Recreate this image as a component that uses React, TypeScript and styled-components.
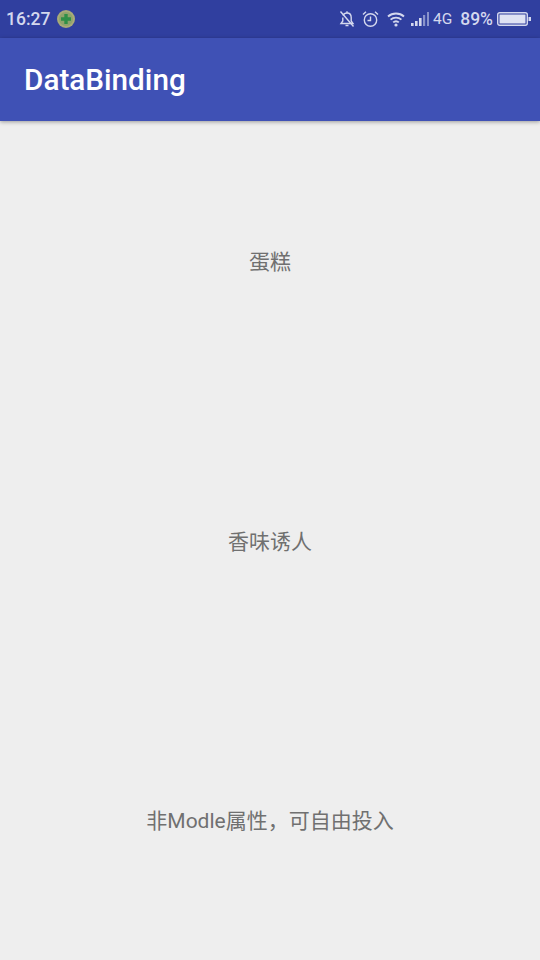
import styled, { createGlobalStyle } from "styled-components";

const GlobalStyle = createGlobalStyle`
  html, body {
    margin: 0;
    padding: 0;
    background: #eeeeee;
  }
`;

const Screen = styled.div`
  width: 540px;
  height: 960px;
  display: flex;
  flex-direction: column;
  overflow: hidden;
  background: #eeeeee;
  font-family: Roboto, "Noto Sans CJK SC", sans-serif;
`;

const StatusBar = styled.div`
  height: 38px;
  flex: none;
  display: flex;
  align-items: center;
  justify-content: space-between;
  padding: 0 9px 0 6px;
  background: #303f9f;
  color: #d4d8ee;
`;

const StatusGroup = styled.div`
  display: flex;
  align-items: center;
`;

const Time = styled.span`
  font-size: 17.5px;
  font-weight: 500;
  margin-right: 6px;
`;

const NetworkLabel = styled.span`
  font-size: 15.5px;
  margin: 0 8px 0 4px;
`;

const Percent = styled.span`
  font-size: 17.5px;
  font-weight: 500;
  margin-right: 4px;
`;

const StatusIcon = styled.svg<{ $gap?: number }>`
  display: block;
  flex: none;
  margin-right: ${({ $gap }) => $gap ?? 0}px;
`;

const AppBar = styled.header`
  height: 83px;
  flex: none;
  display: flex;
  align-items: center;
  padding: 0 24px;
  background: #3f51b5;
  box-shadow: 0 1px 4px rgba(0, 0, 0, 0.35);
  position: relative;
`;

const Title = styled.h1`
  margin: 0;
  font-size: 29.7px;
  font-weight: 500;
  color: #ffffff;
`;

const Content = styled.main`
  flex: 1;
  display: flex;
  flex-direction: column;
  align-items: center;
  padding-top: 129px;
  gap: 254.5px;
`;

const Label = styled.div`
  height: 25px;
  line-height: 25px;
  font-size: 21px;
  color: #707070;
  font-family: Roboto, "Noto Sans CJK SC", sans-serif;
`;

const AppBadge = () => (
  <StatusIcon width="20" height="20" viewBox="0 0 20 20">
    <circle cx="10" cy="10" r="9" fill="#a8ab78" />
    <circle cx="10" cy="10" r="7" fill="#8fa36c" />
    <path d="M10 5v10M5 10h10" stroke="#2f8f47" strokeWidth="3.4" />
  </StatusIcon>
);

const BellOff = () => (
  <StatusIcon $gap={7} width="16" height="18" viewBox="0 0 16 18" fill="none" stroke="#d4d8ee" strokeWidth="1.4">
    <path d="M4 5.5C5 3.5 6.5 3 8 3c2.8 0 4.2 2 4.2 4.5V11l1.8 2.5H2L3.8 11V7.5" />
    <path d="M6.5 15.5h3M8 1.3V3M1.5 1.5l13 15" />
  </StatusIcon>
);

const Alarm = () => (
  <StatusIcon $gap={8} width="17" height="18" viewBox="0 0 17 18" fill="none" stroke="#d4d8ee" strokeWidth="1.4">
    <circle cx="8.5" cy="10" r="6.2" />
    <path d="M8.5 6.5V10.5H5.5M1 4.5L4 1.8M16 4.5L13 1.8" />
  </StatusIcon>
);

const Wifi = () => (
  <StatusIcon $gap={6} width="18" height="15" viewBox="0 0 18 15" fill="none" stroke="#d4d8ee" strokeWidth="1.9">
    <path d="M1 4.5C5.5 .5 12.5 .5 17 4.5M3.6 7.6C6.6 5 11.4 5 14.4 7.6M6.2 10.4C7.8 9 10.2 9 11.8 10.4" />
    <circle cx="9" cy="13" r="1.6" fill="#d4d8ee" stroke="none" />
  </StatusIcon>
);

const Signal = () => (
  <StatusIcon width="18" height="15" viewBox="0 0 18 15" fill="#d4d8ee">
    <rect x="0" y="11" width="2.6" height="3" />
    <rect x="4" y="9" width="2.6" height="5" />
    <rect x="8" y="6" width="2.6" height="8" />
    <rect x="12" y="3" width="2.2" height="11" opacity="0.55" />
    <rect x="16" y="0" width="2" height="14" opacity="0.55" />
  </StatusIcon>
);

const Battery = () => (
  <StatusIcon width="34" height="14" viewBox="0 0 34 14">
    <rect x="0.7" y="0.7" width="29.6" height="12.6" rx="2" fill="none" stroke="#d4d8ee" strokeWidth="1.4" />
    <rect x="2.5" y="2.5" width="26" height="9" fill="#dfe2f3" />
    <rect x="31.5" y="5" width="2.5" height="4" fill="#d4d8ee" />
  </StatusIcon>
);

export default function App() {
  return (
    <Screen>
      <GlobalStyle />
      <StatusBar>
        <StatusGroup>
          <Time>16:27</Time>
          <AppBadge />
        </StatusGroup>
        <StatusGroup>
          <BellOff />
          <Alarm />
          <Wifi />
          <Signal />
          <NetworkLabel>4G</NetworkLabel>
          <Percent>89%</Percent>
          <Battery />
        </StatusGroup>
      </StatusBar>
      <AppBar>
        <Title>DataBinding</Title>
      </AppBar>
      <Content>
        <Label>蛋糕</Label>
        <Label>香味诱人</Label>
        <Label>非Modle属性，可自由投入</Label>
      </Content>
    </Screen>
  );
}
